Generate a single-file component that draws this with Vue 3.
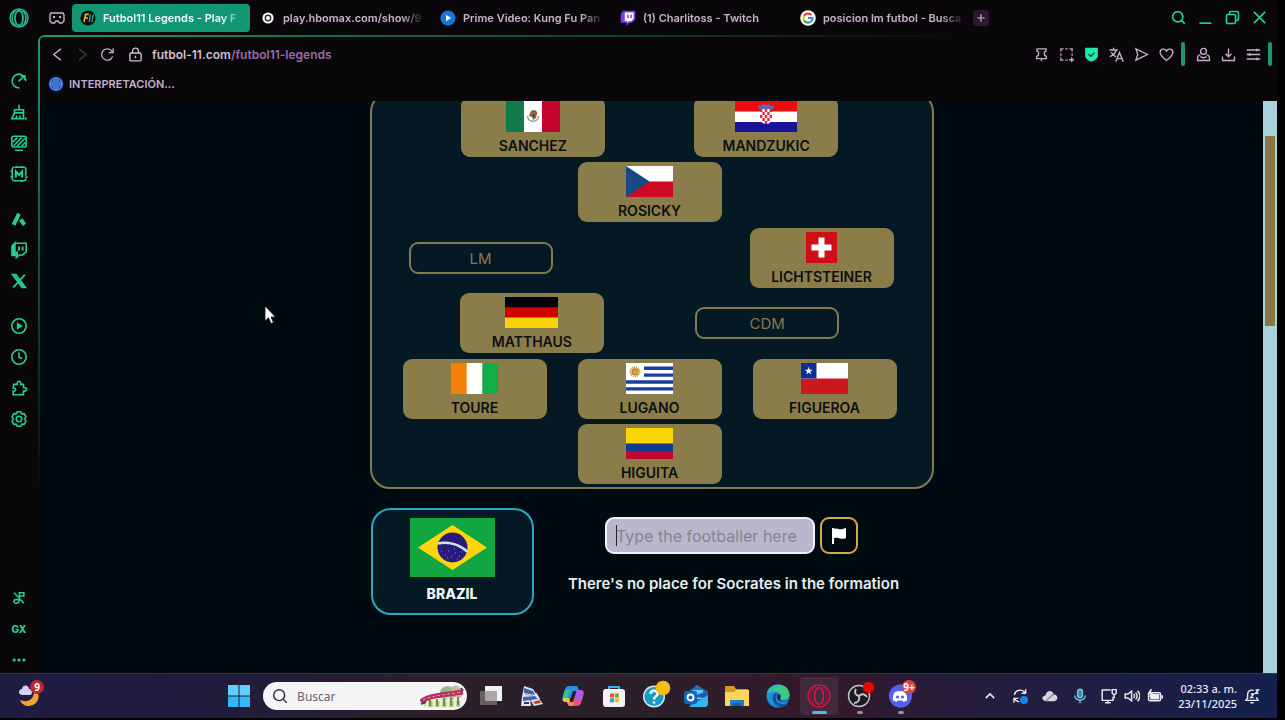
<script setup>
import { ref } from "vue";

const guess = ref("");
const search = ref("");

// line icons, 20x20 grid, drawn with currentColor
const icons = {
  gauge: `<path d="M13.500 3.300a7.600 7.600 0 1 0-3 14.300M17 7.200l.6 2.800"/><path d="M9.500 10.500l6.500-6M12 4.300h4.500v4.200"/>`,
  cleaner: `<path d="M10 2v5.500M5 7.500h10v3.500H5zM5 11l-3 6.500h13V11M6.500 17l1.500-3M10.500 17l1-3"/><path d="M16.500 17.200h2" stroke-width="2.600"/>`,
  screen: `<rect x="2" y="2.500" width="16" height="12" rx="2"/><path d="M4 13l9-9M8 13.500l9-9M3 9l5-5M13 13.500l4-4M5.500 18h9"/>`,
  modbox: `<path d="M5 2.500h10.500a2 2 0 0 1 2 2V12M17.500 15a2 2 0 0 1-2 2.500h-11a2 2 0 0 1-2-2v-11a2 2 0 0 1 2-2M.5 7H2M.5 13H2M17 13.500h2.500M7 1v1.500M13 1v1.500M13 17.500V19"/><path d="M6.500 14V7l3.500 4 3.500-4v7" stroke-width="2.200"/>`,
  aria: `<path d="M4 16.500L10 4" stroke-width="4.400"/><path d="M12 10.500l4 6" stroke-width="4.400"/>`,
  twitch: `<path d="M5.500 2.500H18V12l-4 3.500h-3.500l-3.500 3v-3H2.500v-10z" stroke-width="1.800"/><path d="M2.500 5.500l3-3v10H8V16H2.500z" fill="currentColor"/><path d="M10 6v4.500M14 6v4.500" stroke-width="2.200"/>`,
  x: `<path d="M3 3h3.500l10.500 14h-3.500z" stroke-width="2"/><path d="M16.500 3l-5.500 6M9 11.500L3.500 17" stroke-width="2"/><path d="M5 4.500l10 12" stroke-width="1.800"/>`,
  player: `<circle cx="10" cy="10" r="8"/><path d="M8.500 7.500v5l4-2.500z" fill="currentColor"/>`,
  clock: `<circle cx="10" cy="10" r="8"/><path d="M10 5v5.500l3.500 1"/>`,
  puzzle: `<path d="M4 8V6h4c-.8-4.500 4.800-4.500 4 0h3v3.500c4.500-.5 4.500 4.500 0 4V17.500H3.500v-4c3.500.5 3.500-4 0-3.500z"/>`,
  gear: `<path d="M8 2h4l1.200 2.200 2.500-.2 2 3.500-1.300 2.500 1.300 2.500-2 3.500-2.500-.2L12 18H8l-1.200-2.200-2.500.2-2-3.500L3.600 10 2.300 7.500l2-3.500 2.500.2z"/><circle cx="10" cy="10" r="3"/>`,
  mute: `<path d="M3 2.500l14 15M10.500 13.500V2.500H17v4.500h-6M10 13.500c0 5-8 5-7.500 1 .3-2.500 5-3 7.500-1z"/>`,
  dots: `<g fill="currentColor" stroke="none"><circle cx="3" cy="10" r="2.300"/><circle cx="10" cy="10" r="2.300"/><circle cx="17" cy="10" r="2.300"/></g>`,
  search: `<circle cx="9" cy="9" r="6.800"/><path d="M14 14l4.500 4.500"/>`,
  minimize: `<path d="M2 17.500h16"/>`,
  restore: `<rect x="2" y="6" width="12" height="12" rx="2"/><path d="M6 6V4a2 2 0 0 1 2-2h8a2 2 0 0 1 2 2v8a2 2 0 0 1-2 2h-2"/>`,
  close: `<path d="M2.500 2.500l15 15M17.500 2.500l-15 15"/>`,
  back: `<path d="M14.500 2.500L5 10l9.500 7.500"/>`,
  forward: `<path d="M5.500 2.500L15 10l-9.500 7.500"/>`,
  reload: `<path d="M16.800 12.500A7.500 7.500 0 1 1 15 4.700L17 7"/><path d="M17.500 1.500v6h-6"/>`,
  lock: `<rect x="2.500" y="8" width="15" height="10.500" rx="1.500"/><path d="M6 8V5.500a4 4 0 0 1 8 0V8M10 11.500v3.500"/>`,
  pin: `<path d="M4 2.500h12v3l-2 1v4.500l2.500 1.500v3h-13v-3L6 11V6.500l-2-1zM10 15.500V19"/>`,
  snap: `<path d="M2.500 6V2.500H6M8.500 2.500h3M14 2.500h3.500V6M17.500 8.500v3M2.500 8.500v3M2.500 14v3.500H6M8.500 17.500h3M17 13.500v6.500M13.500 17h6.500"/>`,
  shield: `<path d="M1.500 1h17v10c0 4.500-4 7-8.500 8.500C5.500 18 1.500 15.500 1.500 11z" fill="currentColor" stroke="none"/><path d="M6 9.500L9 12.500l5-5" stroke="#08332a"/>`,
  translate: `<path d="M.5 4h11M6 1v3M9.500 4C8.500 8.500 5.500 11 1 13M3 7c1.500 3 3.500 5 6.500 6"/><path d="M9 19.500l5-12 5 12M11 15.500h6"/>`,
  send: `<path d="M2.500 2.500L18 10 2.500 17.500 5 10z"/>`,
  heart: `<path d="M10 18C5 14 1.500 11.300 1.500 7.300 1.500 2.500 7.500 1 10 5.500c2.500-4.500 8.500-3 8.500 1.800 0 4-3.500 6.700-8.500 10.700z"/>`,
  profile: `<circle cx="10" cy="5.800" r="4"/><path d="M6 10.500c-3.500.5-4 2-4 7.500h16c0-5.500-.5-7-4-7.500M6 12.500c2 2.500 6 2.500 8 0"/>`,
  download: `<path d="M10 2v11M6 9l4 4 4-4M2 12.500V18h16v-5.500"/>`,
  sliders: `<path d="M1 4h18M1 10h18M1 16h18"/><path d="M14.500 2.300v3.400M5 8.300v3.400M14.500 14.300v3.400" stroke-width="2.400"/>`,
  plus: `<path d="M10 2.500v15M2.500 10h15"/>`,
  chevron: `<path d="M3 13.500L10 6.500l7 7" stroke-width="2.600"/>`,
  sync: `<path d="M3 8.500A7.500 7.500 0 0 1 16.500 6M17 1.500v5h-5M2.500 18.500v-5.500H8M3.500 13.500c1.200 2 3 3.500 5.500 3.800"/><circle cx="15" cy="15" r="5" fill="#1583e8" stroke="none"/>`,
  cloud: `<path d="M5 16.500c-6-.5-6-6.500-.5-7C5 2.500 13 2 14.500 8c6-.3 6.500 8 .5 8.500z" fill="#d7d5df" stroke="none"/><path d="M5 16L15 7" stroke="#8c8998"/>`,
  mic: `<rect x="7" y="1.500" width="6" height="10.500" rx="3" fill="#2f8fb8"/><path d="M3.500 9.500c0 7.500 13 7.500 13 0M10 15.500V19"/>`,
  network: `<path d="M12 2.500H1.500v13H15v-4.500M5 18.500h7M8.500 15.500v3"/><path d="M14 2h5v4.500L17.500 8h-2L14 6.500zM16.500 8v5"/>`,
  volume: `<path d="M1.500 7.500h3.500L9.500 4v12L5 12.500H1.500zM12 7.500c1.500 1.500 1.500 3.500 0 5M14.500 5.500c2.500 2.500 2.500 6.500 0 9M17 3.500c3.500 4 3.500 9 0 13"/>`,
  battery: `<rect x="2" y="6" width="15" height="10" rx="2"/><path d="M5 8.500h9.500v5H5z" fill="currentColor"/><path d="M19 9v4M5.500 1.500L2.500 6.500H6L3.500 11" stroke-width="2.200"/>`,
  bell: `<path d="M12 3C7 1.500 4.500 5 4.500 8v4.500l-2 3h15l-1.500-3v-1M8 18.500h4M8.500 7.500H12l-3.500 4.500H12M14.500 2.500H18l-3.500 4H18"/>`
};

const sidebar = [
  ["gauge", "cleaner", "screen", "modbox"],
  ["aria", "twitch", "x"],
  ["player", "clock", "puzzle", "gear"]
];

const favicons = {
  f11: `<circle cx="10" cy="10" r="9.500" fill="#0b0f10"/><path d="M5 15L7 5.500h4M6.300 10H10" stroke="#e7b32c" stroke-width="2" fill="none"/><path d="M11.500 15l1.500-9.500M15 15l1.500-9.500" stroke="#2da06d" stroke-width="1.800"/>`,
  hbo: `<circle cx="10" cy="10" r="7" fill="#fff"/><circle cx="10" cy="10" r="3.400" fill="none" stroke="#333" stroke-width="1.800"/>`,
  prime: `<circle cx="10" cy="10" r="9.500" fill="#1976dc"/><path d="M7.500 6v8l6.500-4z" fill="#fff"/>`,
  twitch: `<path d="M4 1h15v11l-4 4h-3l-4 4v-4H1V5z" fill="#8039e8"/><path d="M6 3h11v8l-3 3h-3l-2 2v-2H6z" fill="#fff"/><path d="M10 5.500V10M14 5.500V10" stroke="#8039e8" stroke-width="1.800"/>`,
  google: `<circle cx="10" cy="10" r="9.700" fill="#fff"/><g fill="none" stroke-width="2.800"><path d="M14.200 6.300A5.800 5.800 0 0 0 5 7.200" stroke="#ea4335"/><path d="M5 7.200a5.800 5.800 0 0 0 0 5.700" stroke="#fbbc05"/><path d="M5 12.900a5.800 5.800 0 0 0 8.800 1.500" stroke="#34a853"/><path d="M13.800 14.400A5.800 5.800 0 0 0 15.700 10H10" stroke="#4285f4"/></g>`
};

const tabs = [
  { icon: "f11", title: "Futbol11 Legends - Play F", active: true },
  { icon: "hbo", title: "play.hbomax.com/show/9" },
  { icon: "prime", title: "Prime Video: Kung Fu Pan" },
  { icon: "twitch", title: "(1) Charlitoss - Twitch" },
  { icon: "google", title: "posicion lm futbol - Busca" }
];

const flags = {
  mx: { w: 54, h: 31, art: `<path fill="#fff" d="M0 0h54v31H0z"/><path fill="#107c4a" d="M0 0h18v31H0z"/><path fill="#c3042c" d="M36 0h18v31H36z"/><path d="M21.500 15c.5 7 10.500 7 11 0" fill="none" stroke="#83a58a" stroke-width="1.500"/><path d="M24 12c1-4 6-4 7 0l-1 5-3 2-1-3-3-1z" fill="#8a6547"/><path d="M26 13l3 1-1 3z" fill="#3d4030"/><path d="M29 10l2 3" stroke="#bd3f31" stroke-width="1.500"/>` },
  hr: { w: 62, h: 31, art: `<path fill="#fff" d="M0 0h62v31H0z"/><path fill="#ef0c0c" d="M0 0h62v10.500H0z"/><path fill="#1a139a" d="M0 21h62v10H0z"/><path fill="#fff" d="M25 8h12v9c0 8-12 8-12 0z"/><path fill="#e4253c" d="M25 8h2.400v3H25zm4.800 0h2.400v3h-2.400zm4.800 0H37v3h-2.400zm-7.200 3h2.400v3h-2.400zm4.800 0h2.400v3h-2.400zM25 14h2.400v3H25zm4.800 0h2.400v3h-2.400zm4.800 0H37v3h-2.400zm-7.200 3h2.400v3h-2.400zm4.800 0h2.400v3h-2.400zm-2.400 3h2.400v3h-2.400z"/><path fill="#526eb0" d="M24 8l-1-4 3 1 2-2 3 1 3-1 2 2 3-1-1 4z"/><path fill="#c63c54" d="M28 5h2v2h-2zm5 0h2v2h-2z"/>` },
  cz: { w: 47, h: 31, art: `<path fill="#fff" d="M0 0h47v31H0z"/><path fill="#cf0921" d="M0 15.500h47V31H0z"/><path fill="#174a82" d="M0 0l23.500 15.500L0 31z"/>` },
  ch: { w: 31, h: 31, art: `<path fill="#d00e17" d="M0 0h31v31H0z"/><path fill="#fff" d="M12.500 5.500h6v7h7v6h-7v7h-6v-7h-7v-6h7z"/>` },
  de: { w: 53, h: 31, art: `<path d="M0 0h53v31H0z"/><path fill="#cf0303" d="M0 10.300h53V31H0z"/><path fill="#f9d406" d="M0 20.600h53V31H0z"/>` },
  ci: { w: 47, h: 31, art: `<path fill="#fff" d="M0 0h47v31H0z"/><path fill="#f7800b" d="M0 0h15.700v31H0z"/><path fill="#11ad4b" d="M31.300 0H47v31H31.300z"/>` },
  uy: { w: 47, h: 31, art: `<path fill="#fff" d="M0 0h47v31H0z"/><path fill="#183ea0" d="M18 3.500h29v3.400H18zm0 6.900h29v3.400H18zM0 17.300h47v3.400H0zm0 6.900h47v3.400H0z"/><circle cx="9" cy="8.800" r="4.600" fill="none" stroke="#c88e1e" stroke-width="1.600" stroke-dasharray="1.200 .8"/><circle cx="9" cy="8.800" r="3.200" fill="#d8a32d" stroke="#8d6219" stroke-width=".7"/>` },
  cl: { w: 47, h: 31, art: `<path fill="#fff" d="M0 0h47v31H0z"/><path fill="#cc1820" d="M0 15.500h47V31H0z"/><path fill="#0a3198" d="M0 0h15.500v15.500H0z"/><path fill="#fff" d="M7.700 3.800l1 2.900h3l-2.400 1.800.9 2.900-2.500-1.800-2.500 1.800.9-2.900-2.400-1.800h3z"/>` },
  co: { w: 47, h: 31, art: `<path fill="#fad508" d="M0 0h47v31H0z"/><path fill="#123890" d="M0 15.500h47V31H0z"/><path fill="#bf0830" d="M0 23.300h47V31H0z"/>` },
  br: { w: 85, h: 59, art: `<path fill="#11a640" d="M0 0h85v59H0z"/><path fill="#fcd60a" d="M42.500 7L77 29.500 42.500 52 8 29.500z"/><circle cx="42.500" cy="29.500" r="15" fill="#291b7c"/><path d="M28 25.500c10-2 21 1 29 8" fill="none" stroke="#cfe6e8" stroke-width="2.600"/><path d="M31 33h1M35 37h1M38 33h1M41 39h1M45 35h1M49 38h1M51 34h1M37 40h1M47 41h1M44 31h1" stroke="#8f88c2"/>` }
};

const formation = [
  { players: [{ name: "SANCHEZ", flag: "mx" }, { name: "MANDZUKIC", flag: "hr" }] },
  { players: [{ name: "ROSICKY", flag: "cz" }] },
  { wide: true, players: [{ pos: "LM" }, { name: "LICHTSTEINER", flag: "ch" }] },
  { players: [{ name: "MATTHAUS", flag: "de" }, { pos: "CDM" }] },
  { players: [{ name: "TOURE", flag: "ci" }, { name: "LUGANO", flag: "uy" }, { name: "FIGUEROA", flag: "cl" }] },
  { players: [{ name: "HIGUITA", flag: "co" }] }
];

// taskbar apps, 24x24 grid
const apps = [
  { name: "Task view", art: `<path fill="#656064" d="M1 7h17v14H1z"/><path fill="#f2f0f2" d="M6 2h17v15H6z"/><path fill="#aaa7aa" d="M6 7h12v10H6z"/>` },
  { name: "Game", art: `<path fill="#dfe6f2" d="M2 13l2-11 9 3 7 11 3 4-9 2H1z"/><path fill="#3d63b8" d="M4 4l9 3 2 4-11-2zM3 13l12-1 3 3-15 2z"/><path fill="#d9a43e" d="M5 10l8 1v1l-8-1z"/><path fill="#b1453b" d="M13 18l6-2 2 3-6 1z"/><path fill="#3c3540" d="M10 15l4 7h-3zM4 18h5v2H4z"/><path fill="#fff" d="M16 8l4 7-3-1z"/>` },
  { name: "Copilot", art: `<path fill="#2293e8" d="M8 2h7c2 0 2 2 3 5h-6l-4 11H5c-4 0-4-3-3-6l2-7c1-2 2-3 4-3z"/><path fill="#36c28c" d="M2 12l2-6h5L7 14c-1 4-5 4-5-2z"/><path fill="#f5c13d" d="M2 14h6l1 4H5c-3 0-4-2-3-4z"/><path fill="#e84f8a" d="M16 22H9c-2 0-2-2-3-4h6l4-12h3c4 0 4 3 3 6l-2 7c-1 2-2 3-4 3z"/><path fill="#a95ce5" d="M16 6h3c4 0 4 3 3 6l-1 3h-7z"/><path fill="#f4884b" d="M9 22c-2 0-2-2-3-4h7l-1 4z"/>` },
  { name: "Store", art: `<path d="M7 6V3h10v3" fill="none" stroke="#39b4e6" stroke-width="2"/><rect x="1" y="5" width="22" height="18" rx="3" fill="#f5f3f4"/><path fill="#e2502b" d="M8 9.500h4v4H8z"/><path fill="#72a925" d="M12.800 9.500h4v4h-4z"/><path fill="#2c9ce0" d="M8 14.300h4v4H8z"/><path fill="#efb424" d="M12.800 14.300h4v4h-4z"/>` },
  { name: "Help", art: `<circle cx="11" cy="12.500" r="11" fill="#d4eef5"/><circle cx="11" cy="12.500" r="9.600" fill="#169ac6"/><path d="M7.500 10c.5-5 8-4 7 .5-.6 2-3.500 2-3.500 5M11 17.500v2" fill="none" stroke="#fff" stroke-width="2.600"/><circle cx="20" cy="4" r="7.300" fill="#f5c012"/>` },
  { name: "Outlook", art: `<path fill="#1774cc" d="M4 8l9-7 11 7v12l-3 3H6z"/><path fill="#68c9f0" d="M9 6h10v9H9z"/><path fill="#1c5bb5" d="M6 13l18-6v7z"/><path fill="#35b6ed" d="M5 23l19-12v10l-2 2z"/><rect x="0" y="7" width="13" height="13" rx="2" fill="#1266b7"/><circle cx="6.500" cy="13.500" r="3" fill="none" stroke="#fff" stroke-width="1.900"/>` },
  { name: "Explorer", art: `<path fill="#d49b20" d="M0 2h9l2 3h12v8H0z"/><path fill="#fbd45a" d="M0 8h9l2-2h13v16H0z"/><path fill="#1c7fc9" d="M5 16h14v6H5z"/><path fill="#145f9d" d="M8 19h8v3H8z"/>` },
  { name: "Edge", art: `<circle cx="12" cy="12" r="11.500" fill="#1f8edb"/><path fill="#3fca83" d="M1 9C4-3 23-2 23.500 11c-1 5-6 5-9 4 3-6-5-10-13.500-6z"/><path fill="#30b8c8" d="M1 9C4 1 12 0 16 3c-5-1-9 2-11 6z"/><path fill="#12519d" d="M9 9c-5 5-1 14 7 14 3 0 5-2 6-4-6 3-13 0-12-6 0-2 1-3 2-3-1-1-2-1-3-1z"/><path fill="#29232f" d="M12 10c3 0 3 3 2 5 0 2 4 3 8 1-1 2-10 3-11-2 0-2 0-3 1-4z"/>` },
  { name: "Opera GX", active: true, art: `<circle cx="12" cy="12" r="11" fill="none" stroke="#c8154a" stroke-width="1.500"/><ellipse cx="12" cy="12" rx="4.500" ry="8.500" fill="none" stroke="#d91a50" stroke-width="1.500"/><path d="M8 3C3 7 3 17 8 21M16 3c5 4 5 14 0 18" fill="none" stroke="#a01440" stroke-width="1.400"/>` },
  { name: "OBS", running: true, art: `<circle cx="11" cy="12" r="10.500" fill="#1d1b22" stroke="#c5c2c8" stroke-width="1.400"/><g fill="none" stroke="#c5c2c8" stroke-width="2"><path d="M11 12c-4-1-5-4-3-7M11 12c3-3 6-2 8 1M11 12c1 4-1 7-5 7"/></g><circle cx="20.500" cy="3.500" r="5.800" fill="#e30707"/>` },
  { name: "Discord", running: true, badge: "9+", art: `<circle cx="11.500" cy="12" r="11.500" fill="#5661e8"/><path fill="#fff" d="M6 8c3-1.500 7-1.500 10 0 2 3 2.500 6 2 8.500l-3.500 1.500-1-1.500h-5l-1 1.500L4 16.500C3.500 13 4 11 6 8z"/><circle cx="8.500" cy="13" r="1.600" fill="#5661e8"/><circle cx="13.500" cy="13" r="1.600" fill="#5661e8"/>` }
];
</script>

<template>
  <div class="desktop">
    <div class="browser">
      <!-- Tab strip -->
      <header class="tabstrip">
        <button class="opera" aria-label="Opera menu">
          <svg width="20" height="20" viewBox="0 0 20 20" fill="none" stroke="currentColor">
            <circle cx="10" cy="10" r="9" stroke-width="1.500" />
            <ellipse cx="10" cy="10" rx="4" ry="7.500" stroke-width="1.800" />
            <path d="M6.500 2.500c-4.500 4-4.500 11 0 15M13.500 2.500c4.500 4 4.500 11 0 15" stroke-width="1.500" />
          </svg>
        </button>
        <button class="workspace" aria-label="Workspace">
          <svg width="16" height="14" viewBox="0 0 16 14" fill="none" stroke="currentColor" stroke-width="1.400">
            <path d="M2 2h12l1 2v6l-2 2h-2.500L9 10H7l-1.500 2H3l-2-2V4z" />
            <path d="M4 6h2M10 6h2" stroke-width="2" />
          </svg>
        </button>
        <nav class="tabs">
          <button v-for="t in tabs" :key="t.icon" class="tab" :class="{ active: t.active }">
            <svg class="favicon" viewBox="0 0 20 20" v-html="favicons[t.icon]"></svg>
            <span class="tab-title">{{ t.title }}</span>
          </button>
        </nav>
        <button class="new-tab" aria-label="New tab">
          <svg class="icon" viewBox="0 0 20 20" v-html="icons.plus"></svg>
        </button>
        <div class="window-controls">
          <button v-for="n in ['search', 'minimize', 'restore', 'close']" :key="n" :aria-label="n">
            <svg class="icon" viewBox="0 0 20 20" v-html="icons[n]"></svg>
          </button>
        </div>
      </header>

      <div class="body">
        <!-- Sidebar -->
        <aside class="sidebar">
          <div v-for="(group, g) in sidebar" :key="g" class="side-group">
            <button v-for="n in group" :key="n" :aria-label="n">
              <svg class="icon" viewBox="0 0 20 20" v-html="icons[n]"></svg>
            </button>
          </div>
          <div class="side-group bottom">
            <button aria-label="Mute"><svg class="icon" viewBox="0 0 20 20" v-html="icons.mute"></svg></button>
            <button class="gx">GX</button>
            <button aria-label="More"><svg class="icon" viewBox="0 0 20 20" v-html="icons.dots"></svg></button>
          </div>
        </aside>

        <main class="main">
          <!-- Address bar -->
          <div class="address">
            <button aria-label="Back"><svg class="icon" viewBox="0 0 20 20" v-html="icons.back"></svg></button>
            <button class="dim" aria-label="Forward"><svg class="icon" viewBox="0 0 20 20" v-html="icons.forward"></svg></button>
            <button aria-label="Reload"><svg class="icon" viewBox="0 0 20 20" v-html="icons.reload"></svg></button>
            <a class="url" href="#">
              <svg class="icon" viewBox="0 0 20 20" v-html="icons.lock"></svg>
              <span>futbol-11.com<span class="path">/futbol11-legends</span></span>
            </a>
            <div class="tools">
              <button v-for="n in ['pin', 'snap', 'shield', 'translate', 'send', 'heart']" :key="n" :class="n" :aria-label="n">
                <svg class="icon" viewBox="0 0 20 20" v-html="icons[n]"></svg>
              </button>
              <i class="divider"></i>
              <button v-for="n in ['profile', 'download', 'sliders']" :key="n" :aria-label="n">
                <svg class="icon" viewBox="0 0 20 20" v-html="icons[n]"></svg>
              </button>
              <i class="divider"></i>
            </div>
          </div>

          <div class="bookmarks">
            <a href="#">
              <svg width="16" height="16" viewBox="0 0 16 16">
                <circle cx="8" cy="8" r="7.500" fill="#2455b8" />
                <g fill="none" stroke="#7da0e6" stroke-width=".8">
                  <circle cx="8" cy="8" r="5.800" />
                  <path d="M6 4v8M8 3v10M10 4v8M4 6v4M12 6v4" />
                </g>
              </svg>
              INTERPRETACIÓN...
            </a>
          </div>

          <!-- Page -->
          <div class="viewport">
            <div class="page">
              <section class="field">
                <div v-for="(row, r) in formation" :key="r" class="line" :class="{ wide: row.wide }">
                  <template v-for="p in row.players" :key="p.name || p.pos">
                    <div v-if="p.name" class="player">
                      <svg
                        :width="flags[p.flag].w"
                        :height="flags[p.flag].h"
                        :viewBox="`0 0 ${flags[p.flag].w} ${flags[p.flag].h}`"
                        v-html="flags[p.flag].art"
                      ></svg>
                      <span>{{ p.name }}</span>
                    </div>
                    <div v-else class="slot">{{ p.pos }}</div>
                  </template>
                </div>
              </section>

              <section class="play">
                <div class="country">
                  <svg width="85" height="59" viewBox="0 0 85 59" v-html="flags.br.art"></svg>
                  <strong>BRAZIL</strong>
                </div>
                <div class="answer">
                  <form class="guess" @submit.prevent>
                    <div class="guess-box">
                      <input v-model="guess" type="text" placeholder="Type the footballer here" aria-label="Footballer" />
                      <i class="caret"></i>
                    </div>
                    <button type="button" aria-label="Give up">
                      <svg width="16" height="18" viewBox="0 0 16 18" fill="#fff">
                        <path d="M1 1h2v1c3-1.500 5 .8 7.500.3L15 1v10c-3 1.300-5 .8-7 .2-2-.6-3-.6-5 0V17H1z" />
                      </svg>
                    </button>
                  </form>
                  <p>There's no place for Socrates in the formation</p>
                </div>
              </section>
            </div>
            <div class="scrollbar"><div class="thumb"></div></div>
          </div>
        </main>
      </div>
    </div>

    <!-- Taskbar -->
    <footer class="taskbar">
      <div class="taskbar-left">
        <button class="weather" aria-label="Weather">
          <svg width="24" height="24" viewBox="0 0 24 24">
            <path d="M20 9c4 13-14 18-18 7 7 3 13 0 14-7z" fill="#f2a12f" />
            <path d="M4 11c-5-1-3-6 0-6 1-5 7-4 7 0 4 0 4 6 1 6z" fill="#cdd5f5" />
          </svg>
          <span class="badge">9</span>
        </button>
      </div>

      <div class="taskbar-apps">
        <button class="app" aria-label="Start">
          <svg width="24" height="24" viewBox="0 0 24 24">
            <path fill="#60d0fa" d="M1 1h10.500v10.500H1zM12.500 1H23v10.500H12.500z" />
            <path fill="#35b8f4" d="M1 12.500h10.500V23H1zM12.500 12.500H23V23H12.500z" />
          </svg>
        </button>
        <label class="search">
          <svg class="icon" viewBox="0 0 20 20" v-html="icons.search"></svg>
          <input v-model="search" type="text" placeholder="Buscar" aria-label="Buscar" />
          <svg width="46" height="26" viewBox="0 0 46 26">
            <path fill="#8fbc86" d="M20 10c0-6 8-9 13-5l8 5-8 7H20z" />
            <path fill="#d3b39d" d="M31 5c4-5 9-2 12 4l-2 6-9-2z" />
            <path fill="#b0c87a" d="M3 18h37v6H5z" />
            <path d="M7 17v7M14 16v8M21 15v9M28 14v10M35 14v10" stroke="#e8edda" stroke-width="3" />
            <path d="M10 17v6M17 16v7M24 16v7M31 15v8M38 14v8" stroke="#7b8c3e" stroke-width="2" />
            <path d="M1 19c8-7 22-7 42-10" fill="none" stroke="#b92d5d" stroke-width="5" />
            <path d="M3 17c10-5 24-5 38-8" fill="none" stroke="#e593ad" stroke-width="1" stroke-dasharray="3 2" />
            <path d="M1 21l5-2M41 5l2 3" stroke="#4e4654" stroke-width="2" />
          </svg>
        </label>
        <button v-for="a in apps" :key="a.name" class="app" :class="{ active: a.active, running: a.running }" :aria-label="a.name">
          <svg width="24" height="24" viewBox="0 0 24 24" v-html="a.art"></svg>
          <span v-if="a.badge" class="badge">{{ a.badge }}</span>
        </button>
      </div>

      <div class="tray">
        <button v-for="n in ['chevron', 'sync', 'cloud', 'mic']" :key="n" :class="n" :aria-label="n">
          <svg class="icon" viewBox="0 0 20 20" v-html="icons[n]"></svg>
        </button>
        <button class="status" aria-label="Network, volume, battery">
          <svg v-for="n in ['network', 'volume', 'battery']" :key="n" class="icon" viewBox="0 0 20 20" v-html="icons[n]"></svg>
        </button>
        <time class="clock"><span>02:33 a. m.</span><span>23/11/2025</span></time>
        <button class="bell" aria-label="Notifications">
          <svg class="icon" viewBox="0 0 20 20" v-html="icons.bell"></svg>
        </button>
      </div>
    </footer>

    <svg class="cursor" width="12" height="20" viewBox="0 0 12 20">
      <path d="M1 1v15l3.500-3.200L7 18.500l2.500-1-2.500-5.500h4.500z" fill="#fff" stroke="#111" stroke-width=".8" />
    </svg>
  </div>
</template>

<style>
body { margin: 0; background: #000; overflow: hidden; }
</style>

<style scoped>
* { box-sizing: border-box; }

.desktop {
  position: relative;
  display: flex;
  flex-direction: column;
  height: 100vh;
  padding: 0 8px 2px 0;
  background: #000;
  font-family: Inter, "Liberation Sans", sans-serif;
}

button {
  display: flex;
  align-items: center;
  justify-content: center;
  flex-shrink: 0;
  padding: 0;
  border: 0;
  background: none;
  color: inherit;
  font: inherit;
}
a { color: inherit; text-decoration: none; }
svg { display: block; flex-shrink: 0; }
.icon {
  width: 16px;
  height: 16px;
  fill: none;
  stroke: currentColor;
  stroke-width: 1.8;
}

.browser {
  flex: 1;
  min-height: 0;
  display: flex;
  flex-direction: column;
  background: #0a070b;
}

/* ── Tab strip ─────────────────────────────────────────── */
.tabstrip {
  display: flex;
  align-items: center;
  height: 35px;
  flex-shrink: 0;
  padding-right: 4px;
  color: #c6b2c8;
}
.opera { width: 38px; color: #1ebd8b; }
.workspace { width: 34px; padding-left: 4px; }
.tabs { display: flex; gap: 2px; min-width: 0; }
.tab {
  width: 178px;
  height: 28px;
  justify-content: flex-start;
  gap: 7px;
  padding: 0 4px 0 8px;
  border-radius: 4px;
  font-size: 11px;
  font-weight: 600;
}
.tab.active { background: #119774; color: #f2faf7; }
.favicon { width: 16px; height: 16px; }
.tab-title {
  flex: 1;
  text-align: left;
  line-height: 20px;
  white-space: nowrap;
  mask-image: linear-gradient(to right, #000 118px, rgba(0, 0, 0, 0.15) 138px);
}
.new-tab { width: 16px; height: 16px; margin-left: 3px; border-radius: 3px; background: #291b2c; }
.new-tab .icon { width: 10px; height: 10px; stroke-width: 2.4; }
.window-controls { display: flex; margin-left: auto; color: #22cf98; }
.window-controls button { width: 27px; height: 28px; }
.window-controls .icon { width: 15px; height: 15px; stroke-width: 2.2; }

/* ── Sidebar ───────────────────────────────────────────── */
.body { flex: 1; min-height: 0; display: flex; }
.sidebar {
  width: 38px;
  flex-shrink: 0;
  display: flex;
  flex-direction: column;
  gap: 19px;
  padding-top: 33px;
  color: #25cd96;
}
.side-group { display: flex; flex-direction: column; gap: 5px; }
.side-group button { height: 26px; }
.side-group .icon { width: 18px; height: 18px; }
.side-group.bottom { margin-top: auto; }
.side-group.bottom .icon { width: 14px; height: 14px; stroke-width: 2.2; }
.side-group .gx { font-size: 10px; font-weight: 800; }

/* ── Toolbar ───────────────────────────────────────────── */
.main {
  position: relative;
  flex: 1;
  min-width: 0;
  display: flex;
  flex-direction: column;
  padding: 2px 0 0 2px;
}
/* glow line that fades out along the top and the left edge */
.main::before {
  content: "";
  position: absolute;
  inset: 0;
  border: solid #1c9a74;
  border-width: 2px 0 0 2px;
  border-radius: 6px 0 0 0;
  mask-image: radial-gradient(ellipse 75% 72% at 0 0, #000, transparent);
  pointer-events: none;
}
.address {
  display: flex;
  align-items: center;
  height: 34px;
  flex-shrink: 0;
  padding: 0 5px;
  color: #c4afc6;
}
.address > button { width: 25px; }
.address .icon { width: 15px; height: 15px; }
.dim { opacity: 0.3; }
.url {
  display: flex;
  align-items: center;
  gap: 9px;
  margin-left: 8px;
  font-size: 12px;
  font-weight: 600;
  color: #d2bfd4;
}
.path { color: #9b6ba4; }
.tools { display: flex; align-items: center; margin-left: auto; }
.tools button { width: 25px; }
.tools .shield { color: #1cebaa; }
.divider { width: 4px; height: 24px; margin: 0 6px 0 2px; border-radius: 2px; background: #1b9671; }
.divider:last-child { margin-right: 0; }

.bookmarks {
  height: 30px;
  flex-shrink: 0;
  padding-left: 8px;
  font-size: 11px;
  font-weight: 600;
  color: #c4afc6;
}
.bookmarks a { display: flex; align-items: center; gap: 5px; height: 26px; }

/* ── Page ──────────────────────────────────────────────── */
.viewport {
  flex: 1;
  min-height: 0;
  display: flex;
  overflow: hidden;
  background: #000b11;
}
.page { flex: 1; min-width: 0; margin-top: -9px; }
.scrollbar { width: 14px; padding: 35px 2px 0; background: #a9d1dc; }
.thumb { height: 190px; background: #897644; }

.field {
  display: grid;
  grid-auto-rows: 1fr;
  width: 564px;
  max-width: 100%;
  height: 397px;
  margin: 0 auto;
  padding-right: 4px;
  border: 2px solid #84794d;
  border-radius: 20px;
  background: #041923;
}
.line { display: flex; align-items: center; justify-content: space-evenly; }
.line.wide { justify-content: space-between; padding: 0 34px; }

.player {
  display: flex;
  flex-direction: column;
  align-items: center;
  width: 144px;
  height: 60px;
  padding-top: 4px;
  border-radius: 9px;
  background: #8b7d4a;
  color: #0c1011;
  font-size: 14px;
  font-weight: 600;
  line-height: 28px;
}
.slot {
  width: 144px;
  height: 32px;
  margin-left: 3px;
  border: 2px solid #84794d;
  border-radius: 9px;
  color: #84794d;
  font-size: 15px;
  line-height: 30px;
  text-align: center;
}

.play {
  display: flex;
  width: 564px;
  max-width: 100%;
  margin: 19px auto 0;
  padding-left: 1px;
}
.country {
  display: flex;
  flex-direction: column;
  align-items: center;
  width: 163px;
  height: 107px;
  padding-top: 8px;
  border: 2px solid #2ba9c2;
  border-radius: 20px;
  background: #041923;
  color: #f2f6f7;
  font-size: 14px;
  line-height: 34px;
}
.country strong { font-weight: 800; }
.answer {
  flex: 1;
  display: flex;
  flex-direction: column;
  align-items: center;
  padding-top: 9px;
}
.guess { display: flex; gap: 5px; margin-right: 4px; }
.guess-box { position: relative; }
.guess-box input {
  display: block;
  width: 210px;
  height: 37px;
  padding: 0 9px;
  border: 2px solid #f3f2f7;
  border-radius: 9px;
  outline: 0;
  background: #bab7cc;
  color: #222;
  font: 400 16px Inter, "Liberation Sans", sans-serif;
}
.guess-box input::placeholder { color: #85838f; opacity: 1; }
.caret { position: absolute; left: 11px; top: 8px; width: 1px; height: 21px; background: #25252c; }
.guess button {
  width: 38px;
  height: 37px;
  border: 2px solid #d1ac45;
  border-radius: 9px;
}
.answer p {
  margin: 18px 0 0;
  color: #e6edf0;
  font-size: 15px;
  font-weight: 600;
  line-height: 24px;
}

/* ── Taskbar ───────────────────────────────────────────── */
.taskbar {
  display: grid;
  grid-template-columns: 17% auto 1fr;
  column-gap: 3px;
  align-items: center;
  height: 45px;
  flex-shrink: 0;
  border-top: 1px solid #343244;
  background: linear-gradient(to right, #1f1c42, #211b3d 17%, #2b2029 34%, #2b2029 50%, #35192b 64%, #271d3a 74%, #1e1e44 88%, #13204d);
  font-family: "Noto Sans", sans-serif;
  color: #eceaf2;
}
.weather { position: relative; margin-left: 18px; }
.badge {
  position: absolute;
  top: -4px;
  right: -2px;
  min-width: 14px;
  height: 14px;
  border-radius: 7px;
  background: #c02630;
  color: #fff;
  font-size: 10px;
  font-weight: 700;
  line-height: 14px;
}
.app .badge { top: 3px; right: 4px; background: #d8434b; }
.taskbar-apps { display: flex; align-items: center; gap: 3px; }
.app { position: relative; width: 38px; height: 38px; border-radius: 4px; }
.app svg { overflow: visible; }
.app.active { background: #412b3a; }
.app.active::after,
.app.running::after {
  content: "";
  position: absolute;
  bottom: 1px;
  width: 6px;
  height: 3px;
  border-radius: 2px;
  background: #9b8f9f;
}
.app.active::after { width: 15px; background: #58b4e8; }
.search {
  display: flex;
  align-items: center;
  width: 204px;
  height: 28px;
  margin: 0 2px;
  padding: 0 1px 0 9px;
  border-radius: 14px;
  background: #f5f4f6;
  color: #35333a;
}
.search input {
  flex: 1;
  min-width: 0;
  padding: 0 9px;
  border: 0;
  outline: 0;
  background: none;
  font: 12px "Noto Sans", sans-serif;
}
.search input::placeholder { color: #68656c; opacity: 1; }

.tray { display: flex; align-items: center; justify-content: flex-end; padding-right: 17px; }
.tray button { width: 30px; }
.chevron .icon { width: 12px; height: 12px; }
.mic { color: #70cbe0; }
.tray .status { width: auto; gap: 7px; padding: 0 6px; }
.clock {
  display: flex;
  flex-direction: column;
  align-items: flex-end;
  width: 68px;
  font-size: 11px;
  font-weight: 500;
  line-height: 15px;
  white-space: nowrap;
}
.tray .bell { width: 16px; margin-left: 7px; }

.cursor { position: absolute; left: 264px; top: 305px; }
</style>
